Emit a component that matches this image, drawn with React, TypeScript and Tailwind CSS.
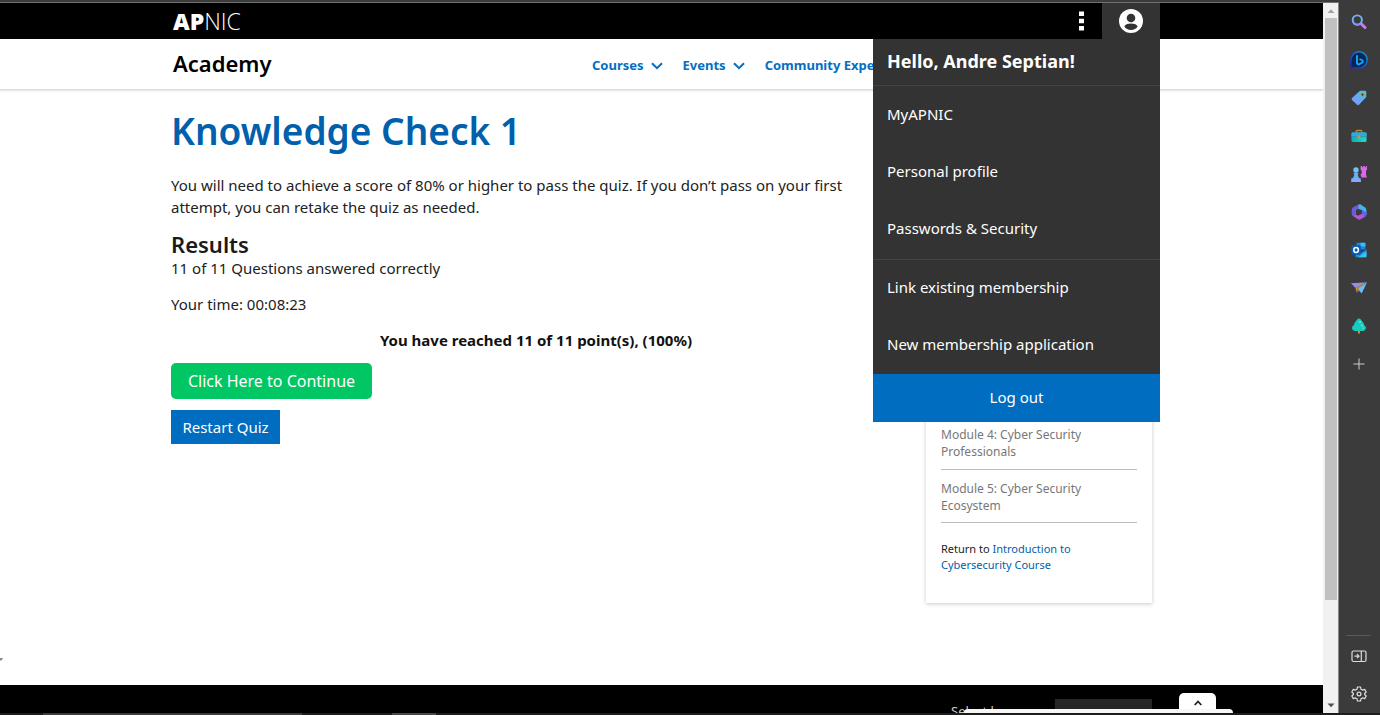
import React from "react";

function Chevron({ className }: { className?: string }) {
  return (
    <svg viewBox="0 0 12 8" className={className ?? "h-2 w-3"} fill="none" stroke="currentColor" strokeWidth="2">
      <path d="M1 1.2 6 6.2 11 1.2" />
    </svg>
  );
}

function TopBar() {
  return (
    <header className="bg-black">
      <div className="mx-auto flex h-9 max-w-[997px] items-stretch pl-2">
        <a href="#" className="flex items-center pl-[2px] font-['Open_Sans',sans-serif] text-[23px] leading-9 text-white">
          <span className="font-extrabold">AP</span>
          <span className="font-light">NIC</span>
        </a>
        <button type="button" aria-label="More" className="ml-auto flex w-[42px] items-center justify-center text-white">
          <svg viewBox="0 0 5 20" className="h-5 w-[5px]" fill="currentColor">
            <path d="M0 0.500h5v4.500H0zM0 7.700h5v4.500H0zM0 15h5v4.500H0z" />
          </svg>
        </button>
        <button type="button" aria-label="Account" className="flex w-[58px] items-center justify-center bg-[#333] text-white">
          <svg viewBox="0 0 24 24" className="h-6 w-6">
            <circle cx="12" cy="12" r="12" fill="#fff" />
            <circle cx="12" cy="9" r="4.300" fill="#333" />
            <path d="M5.300 17.200c1.300-2 3.900-2.700 6.700-2.700s5.400.7 6.700 2.700c-1.300 2.500-3.900 3.800-6.700 3.800s-5.400-1.300-6.700-3.800z" fill="#333" />
          </svg>
        </button>
      </div>
    </header>
  );
}

const menuItem = "flex h-[57px] items-center px-[14px] pb-[2px] text-[15px]";

function AccountMenu() {
  return (
    <div className="absolute top-0 right-0 z-10 flex w-[287px] flex-col bg-[#333] text-white">
      <p className="h-[47px] border-b border-[#444] px-[14px] text-lg leading-[44px] font-bold">Hello, Andre Septian!</p>
      <div className="border-b border-[#444] py-px">
        <a href="#" className={menuItem}>MyAPNIC</a>
        <a href="#" className={menuItem}>Personal profile</a>
        <a href="#" className={menuItem}>Passwords &amp; Security</a>
      </div>
      <a href="#" className={menuItem}>Link existing membership</a>
      <a href="#" className={menuItem}>New membership application</a>
      <button type="button" className="h-12 bg-[#006dc0] pb-[2px] text-[15px]">Log out</button>
    </div>
  );
}

function Nav() {
  return (
    <nav className="border-b border-[#ddd] bg-white shadow-[0_1px_2px_rgba(0,0,0,0.12)]">
      <div className="relative mx-auto flex h-[50px] max-w-[997px] items-center pl-[10px]">
        <a href="#" className="w-[419px] shrink-0 pb-[2px] text-[22px] font-semibold text-black">Academy</a>
        <div className="flex min-w-0 items-center gap-5 overflow-hidden pt-[3px] text-[13px] font-bold whitespace-nowrap text-[#066dc0]">
          <a href="#" className="flex items-center gap-[7px]">Courses <Chevron /></a>
          <a href="#" className="flex items-center gap-[7px]">Events <Chevron /></a>
          <a href="#" className="flex items-center">Community Experience</a>
        </div>
        <AccountMenu />
      </div>
    </nav>
  );
}

function Quiz() {
  return (
    <main className="min-w-0 flex-1 text-[15px] leading-[22px] text-[#222]">
      <h1 className="text-[37px] leading-[50px] font-semibold text-[#0060ac]">Knowledge Check 1</h1>
      <p className="mt-[18px] max-w-[690px]">
        You will need to achieve a score of 80% or higher to pass the quiz. If you don’t pass on your first attempt, you can retake the quiz as needed.
      </p>
      <h2 className="mt-[14px] mb-px text-[22px] leading-6 font-semibold text-[#1a1a1a]">Results</h2>
      <p>11 of 11 Questions answered correctly</p>
      <p className="mt-[14px]">Your time: 00:08:23</p>
      <p className="mt-[14px] text-center font-bold text-[#111]">You have reached 11 of 11 point(s), (100%)</p>
      <div className="mt-3 flex flex-col items-start gap-[11px] text-white">
        <button type="button" className="h-9 w-[201px] rounded-[5px] bg-[#00c763] text-base">Click Here to Continue</button>
        <button type="button" className="h-[34px] w-[109px] bg-[#006dc0]">Restart Quiz</button>
      </div>
    </main>
  );
}

function ModuleList() {
  return (
    <aside className="w-[226px] shrink-0 bg-white px-[15px] pt-[320px] pb-[30px] text-xs shadow-[0_1px_4px_rgba(0,0,0,0.22)]">
      <ul className="leading-[17px] text-[#777]">
        <li className="border-b border-[#bbb] pr-10 pb-[9px]"><a href="#">Module 4: Cyber Security Professionals</a></li>
        <li className="border-b border-[#bbb] pt-[10px] pr-10 pb-[8px]"><a href="#">Module 5: Cyber Security Ecosystem</a></li>
      </ul>
      <p className="mt-[18px] pr-10 text-[11px] leading-4 text-[#222]">
        Return to <a href="#" className="text-[#0060ac]">Introduction to Cybersecurity Course</a>
      </p>
    </aside>
  );
}

function Footer() {
  return (
    <footer className="relative h-7 shrink-0 overflow-hidden bg-black">
      <div className="mx-auto flex max-w-[997px] items-start justify-end gap-4 px-2 pt-[14px]">
        <label htmlFor="language" className="w-[88px] pt-[2px] text-[13px] leading-5 whitespace-nowrap text-[#ccc]">Select lang</label>
        <select id="language" className="h-8 w-[97px] appearance-none bg-[#262626] px-3 text-xs text-[#ccc]">
          <option value="" />
        </select>
      </div>
      <div className="absolute right-[90px] bottom-0 flex w-[269px] flex-col items-end">
        <button type="button" aria-label="Expand" className="mr-[17px] flex h-4 w-[37px] items-center justify-center rounded-t-[5px] bg-white pt-[3px] text-[#222]">
          <svg viewBox="0 0 8 6" className="h-[6px] w-2" fill="none" stroke="currentColor" strokeWidth="1.800">
            <path d="M0.700 5 4 1.500 7.300 5" />
          </svg>
        </button>
        <div className="h-1 w-full rounded-t-[4px] bg-[#f7f7f7]" />
      </div>
    </footer>
  );
}

function Scrollbar() {
  return (
    <div className="flex w-4 shrink-0 flex-col items-center border-r border-[#888] bg-[#f1f1f1]" aria-hidden="true">
      <svg viewBox="0 0 14 15" className="h-[15px] w-[14px]"><path d="M3.500 10 7 6.200 10.500 10z" fill="#a3a3a3" /></svg>
      <div className="h-[582px] w-3 bg-[#c1c1c1]" />
      <svg viewBox="0 0 14 15" className="mt-auto h-[15px] w-[14px]"><path d="M3.500 5.500 7 9.300 10.500 5.500z" fill="#505050" /></svg>
    </div>
  );
}

const icon = "h-4 w-4";

function SearchIcon() {
  return (
    <svg viewBox="0 0 16 16" className={icon} fill="none">
      <path d="M10.200 9.700 14 13.500" stroke="#c77be8" strokeWidth="3" strokeLinecap="round" />
      <circle cx="6.300" cy="6" r="4.600" stroke="#6fb4f7" strokeWidth="1.900" />
      <path d="M2 7.800a4.600 4.600 0 0 0 7.600 1.500" stroke="#8f8ef5" strokeWidth="1.900" />
    </svg>
  );
}

function BingIcon() {
  return (
    <svg viewBox="0 0 18 18" className="h-[18px] w-[18px]" fill="none">
      <defs>
        <linearGradient id="bing" x1="0" y1="1" x2="1" y2="0">
          <stop stopColor="#3410d8" /><stop offset="0.550" stopColor="#1165d4" /><stop offset="1" stopColor="#12a9d8" />
        </linearGradient>
      </defs>
      <path d="M9.300.8a8.100 8.100 0 1 1-2.800 15.800H1V10A8.300 8.300 0 0 1 9.300.8z" fill="#052657" stroke="url(#bing)" strokeWidth="1.400" />
      <path d="M7 4.200v8.200l1.600 1.200 4.100-2.400V9.500L9.500 8" stroke="#1aa7ee" strokeWidth="1.900" strokeLinejoin="round" />
    </svg>
  );
}

function TagIcon() {
  return (
    <svg viewBox="0 0 16 16" className={icon}>
      <defs><linearGradient id="tag" x1="1" y1="0" x2="0" y2="1"><stop stopColor="#39c5ef" /><stop offset="1" stopColor="#8b91fa" /></linearGradient></defs>
      <path d="M9 .8h5q1.300 0 1.300 1.300v5L8 14.800q-1 .9-2 0L1 9.900q-.9-1 0-1.900z" fill="url(#tag)" />
      <circle cx="11.500" cy="4.600" r="1.600" fill="#4b3720" stroke="#e0a316" />
    </svg>
  );
}

function ToolboxIcon() {
  return (
    <svg viewBox="0 0 16 16" className={icon}>
      <defs><linearGradient id="box" x1="0" y1="0" x2="1" y2="0"><stop stopColor="#13a9bd" /><stop offset="1" stopColor="#22e0b4" /></linearGradient></defs>
      <path d="M5.200 5V3.300q0-.8.8-.8h4q.8 0 .8.800V5" fill="none" stroke="#c48618" strokeWidth="1.300" />
      <rect x=".5" y="4.500" width="15" height="9.500" rx="1.200" fill="url(#box)" />
      <path d="M.5 8.800V5.700q0-1.200 1.200-1.200h12.600q1.200 0 1.200 1.200v3.100z" fill="#38a3e6" />
      <rect x=".5" y="8.400" width="15" height=".8" fill="#1c93ad" />
      <circle cx="8" cy="8.900" r="1.600" fill="#b8a13a" />
    </svg>
  );
}

function ChessIcon() {
  return (
    <svg viewBox="0 0 18 18" className="h-[18px] w-[18px]">
      <path d="M10.600 1h1.500v1.300h1V1h1.700v1.300h1V1H17v3.700l-1 1V10l1 2.500h-5.500l-1-3 1.200-1V5.700l-1.100-1z" fill="#d968ec" />
      <circle cx="6" cy="5" r="2.700" fill="#6cc4fb" />
      <path d="M3.700 7.700h4.600v1.500H7.700q.2 2.800 2 4.100h1V17H1.400v-3.700h1q1.700-1.300 2-4.100h-.7z" fill="#6bb1f8" />
      <path d="M1.400 14.500h9.300V17H1.400z" fill="#8fa5fb" />
    </svg>
  );
}

function OfficeIcon() {
  return (
    <svg viewBox="0 0 16 16" className={icon}>
      <path d="M7.900.3 2 3.300Q.7 4.200.7 6v4.300q0 1.500 1.600 1.900L5 10.600V6.300l5-3.200z" fill="#7258db" />
      <path d="M7.900.3Q10 0 11.400 1.700L14.300 3.500Q15.400 4.500 15.400 6v5L11 8.800V6.200L7.300 4.700z" fill="#42b4e8" />
      <path d="M2 12.100 7 15.300q1.300.8 2.700 0l4.200-2.600q1.500-1 1.500-2.700V8.500L11 6v3.700l-4.200 2.100L5 10.600z" fill="#b654dc" />
      <path d="M11 6 15.400 8.800v2.100q-.4 1.200-1.500 1.800L11 10z" fill="#536af0" />
    </svg>
  );
}

function OutlookIcon() {
  return (
    <svg viewBox="0 0 16 16" className={icon}>
      <path d="M5.500 1.500Q5.500.7 6.300.7h7.200q.9 0 .9.800v6H5.500z" fill="#1689db" />
      <path d="M9.500.7h4q.9 0 .9.800v3H9.500z" fill="#38bdf0" />
      <path d="M4.500 7.700 10 11l5.500-3.500v6.700q0 1-1 1h-9q-1 0-1-1z" fill="#1796e5" />
      <path d="m7 15.200 8.500-5.700v4.700q0 1-1 1z" fill="#36c4f5" />
      <rect x=".3" y="3.200" width="9.600" height="9.600" rx="1.200" fill="#075ab8" />
      <ellipse cx="5.100" cy="8" rx="2.300" ry="2.500" fill="none" stroke="#fff" strokeWidth="1.500" />
    </svg>
  );
}

function PlaneIcon() {
  return (
    <svg viewBox="0 0 16 16" className={icon}>
      <path d="M0 3.200 16 2.300 4.500 8z" fill="#8f8ff2" />
      <path d="M4.500 7.900 16 2.300 5.500 11.500v1.800z" fill="#c98a1a" />
      <path d="M7 9.200 16 2.300 10.700 13.600z" fill="#62c0fb" />
      <path d="m5.500 13.300 2.800-2.200L7 9.200z" fill="#496fd0" />
    </svg>
  );
}

function TreeIcon() {
  return (
    <svg viewBox="0 0 16 16" className={icon}>
      <path d="M7 12h2v3.500H7z" fill="#d78b22" />
      <path d="M6.200 1.500Q8-.5 9.800 1.500l2.500 3.300q.7 1 .7 2.200 2.200 1.200 2 3.300-.4 2.500-3 2.700H4q-2.600-.2-3-2.700Q.8 8.200 3 7q0-1.200.7-2.200z" fill="#16cbbd" />
      <circle cx="9" cy="4" r="1" fill="#7cebbb" /><circle cx="11" cy="7.500" r="1" fill="#65e9b6" />
      <circle cx="12" cy="10.300" r="1" fill="#57dfaa" />
    </svg>
  );
}

function PlusIcon() {
  return <svg viewBox="0 0 12 12" className="h-3 w-3" stroke="#ccc"><path d="M6 .5v11M.5 6h11" /></svg>;
}

function PanelIcon() {
  return (
    <svg viewBox="0 0 16 16" className={icon} fill="none" stroke="#ddd" strokeWidth="1.200">
      <rect x="1" y="3" width="14" height="10.500" rx="1.500" />
      <path d="M10.300 3v10.500M3.500 8.200h4.200M6 6.200l2 2-2 2" />
    </svg>
  );
}

function GearIcon() {
  return (
    <svg viewBox="0 0 16 16" className={icon} fill="none" stroke="#ddd" strokeWidth="1.200" strokeLinejoin="round">
      <path d="M6.500 1h3l.5 2.200 1.500.9 2.200-.7 1.500 2.600L13.600 7.500v1l1.600 1.500-1.500 2.600-2.200-.7-1.500.9L9.500 15h-3L6 12.800l-1.500-.9-2.200.7L.8 10l1.600-1.500v-1L.8 6l1.500-2.600 2.200.7L6 3.200z" />
      <circle cx="8" cy="8" r="1.900" />
    </svg>
  );
}

const tools: [string, () => React.ReactElement][] = [
  ["Search", SearchIcon],
  ["Discover", BingIcon],
  ["Shopping", TagIcon],
  ["Tools", ToolboxIcon],
  ["Games", ChessIcon],
  ["Microsoft 365", OfficeIcon],
  ["Outlook", OutlookIcon],
  ["Drop", PlaneIcon],
  ["E-tree", TreeIcon],
  ["Customize", PlusIcon],
];

function Sidebar() {
  return (
    <div className="flex w-[41px] shrink-0 flex-col items-center bg-[#3b3b3b] pt-px pr-[2px]">
      {tools.map(([name, Icon]) => (
        <button key={name} type="button" aria-label={name} className="flex h-[38px] w-full items-center justify-center">
          <Icon />
        </button>
      ))}
      <div className="mt-auto w-[25px] border-t border-[#5a5a5a] pt-px" />
      <button type="button" aria-label="Hide sidebar" className="flex h-[38px] w-full items-center justify-center"><PanelIcon /></button>
      <button type="button" aria-label="Settings" className="flex h-[38px] w-full items-center justify-center"><GearIcon /></button>
    </div>
  );
}

export default function App() {
  return (
    <div className="flex h-screen flex-col overflow-hidden bg-[#1d1d1d] font-['Noto_Sans','Open_Sans',sans-serif]">
      <div className="h-[2px] shrink-0 bg-[#3b3b3b]" />
      <div className="flex min-h-0 flex-1">
        <div className="flex min-w-0 flex-1 border-t border-[#707070]">
          <div className="flex min-w-0 flex-1 flex-col bg-white">
            <TopBar />
            <Nav />
            <div className="mx-auto flex w-full max-w-[997px] flex-1 items-start gap-[25px] px-2 pt-4">
              <Quiz />
              <ModuleList />
            </div>
            <svg viewBox="0 0 3 3" className="mb-6 h-[3px] w-[3px] shrink-0" aria-hidden="true"><path d="M0 0h3L1.500 2.500H0z" fill="#888" /></svg>
            <Footer />
          </div>
          <Scrollbar />
        </div>
        <Sidebar />
      </div>
      <div className="flex h-[2px] shrink-0 bg-[#1d1d1d]">
        <div className="ml-[43px] w-[259px] bg-[#3b3b3b]" />
        <div className="ml-[90px] w-11 bg-[#484848]" />
      </div>
    </div>
  );
}
